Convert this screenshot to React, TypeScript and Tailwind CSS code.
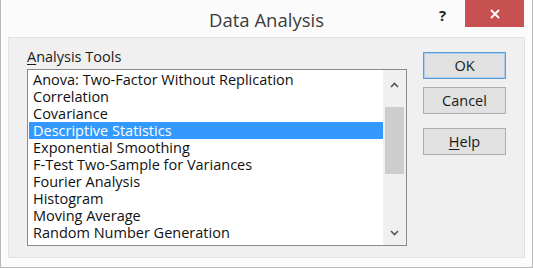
import React from 'react'

const tools = [
  'Anova: Two-Factor Without Replication',
  'Correlation',
  'Covariance',
  'Descriptive Statistics',
  'Exponential Smoothing',
  'F-Test Two-Sample for Variances',
  'Fourier Analysis',
  'Histogram',
  'Moving Average',
  'Random Number Generation',
]

const font = { fontFamily: '"Open Sans", "Noto Sans", sans-serif' }

function DialogButton({ children, isDefault = false }: { children: React.ReactNode; isDefault?: boolean }) {
  return (
    <button
      type="button"
      className={`h-[27px] w-[83px] bg-[#e1e1e1] text-[14.5px] text-[#1a1a1a] border ${
        isDefault ? 'border-[#5b9bd8] shadow-[inset_0_0_0_1px_#a9cdee]' : 'border-[#adadad]'
      }`}
    >
      {children}
    </button>
  )
}

export default function App() {
  const [selected, setSelected] = React.useState(3)

  return (
    <div
      className="w-[533px] h-[268px] bg-[#fbfbfb] border-x border-b border-[#b9b9b9] flex flex-col overflow-hidden"
      style={font}
    >
      {/* title bar */}
      <div className="h-[37px] shrink-0 flex items-start relative">
        <div className="flex-1 text-center pt-[6px] text-[18.5px] text-[#3b3b3b]">Data Analysis</div>
        <div className="absolute left-[438px] top-[4px] text-[15px] font-bold text-[#222]">?</div>
        <div className="absolute left-[464px] top-0 w-[59px] h-[27px] bg-[#c75050] flex items-center justify-center">
          <svg width="10" height="10" viewBox="0 0 10 10">
            <path d="M1 1L9 9M9 1L1 9" stroke="white" strokeWidth="1.8" />
          </svg>
        </div>
      </div>

      {/* client area */}
      <div className="mx-[7px] h-[221px] bg-[#f0f0f0] border border-[#e2e2e2] flex pl-[18px] pt-[9px]">
        <div className="flex flex-col">
          <div className="text-[14.5px] text-[#1a1a1a] h-[22px] leading-[20px]">
            <span className="underline underline-offset-2">A</span>nalysis Tools
          </div>
          <div className="w-[380px] h-[177px] bg-white border border-[#8c8c8c] flex">
            <div className="flex-1 pt-[1px] pl-[1px]">
              {tools.map((t, i) => (
                <div
                  key={t}
                  onClick={() => setSelected(i)}
                  className={`h-[17px] leading-[17px] pl-[4px] text-[14.5px] whitespace-nowrap ${
                    i === selected ? 'bg-[#3399ff] text-white' : 'text-[#111]'
                  }`}
                >
                  {t}
                </div>
              ))}
            </div>
            <div className="w-[23px] bg-[#f0f0f0] flex flex-col items-center">
              <div className="h-[30px] flex items-center justify-center">
                <svg width="9" height="6" viewBox="0 0 9 6">
                  <path d="M1 5L4.5 1.5L8 5" fill="none" stroke="#555" strokeWidth="1.6" />
                </svg>
              </div>
              <div className="mt-[7px] w-[19px] h-[67px] bg-[#cdcdcd]" />
              <div className="flex-1" />
              <div className="h-[24px] flex items-center justify-center">
                <svg width="9" height="6" viewBox="0 0 9 6">
                  <path d="M1 1L4.5 4.5L8 1" fill="none" stroke="#555" strokeWidth="1.6" />
                </svg>
              </div>
            </div>
          </div>
        </div>

        <div className="ml-[16px] mt-[5px] flex flex-col">
          <DialogButton isDefault>OK</DialogButton>
          <div className="mt-[8px]">
            <DialogButton>Cancel</DialogButton>
          </div>
          <div className="mt-[14px]">
            <DialogButton>
              <span className="underline underline-offset-2">H</span>elp
            </DialogButton>
          </div>
        </div>
      </div>
    </div>
  )
}
